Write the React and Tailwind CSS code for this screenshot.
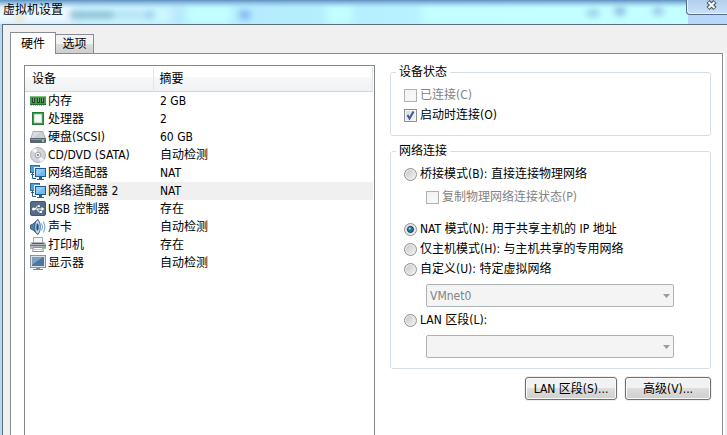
import { useState } from "react";

const MemoryIcon = () => (
	<svg viewBox="0 0 16 16" className="h-4 w-4" aria-hidden="true">
		<rect x="0" y="3" width="16" height="9" fill="#3f9c48" />
		<rect x="0" y="3" width="16" height="1" fill="#7cc47d" />
		<rect x="2" y="5" width="3" height="5" fill="#2b3f2e" />
		<rect x="7" y="5" width="3" height="5" fill="#2b3f2e" />
		<rect x="11" y="5" width="3" height="5" fill="#2b3f2e" />
		<path d="M3.500 5v4M8.500 5v4M12.500 5v4" stroke="#8b9a8c" strokeWidth="1" />
		<rect x="0" y="11" width="16" height="1" fill="#20702e" />
		<path
			d="M1 12.500h14"
			stroke="#c5b96c"
			strokeWidth="1"
			strokeDasharray="1 1"
		/>
	</svg>
);

const CpuIcon = () => (
	<svg viewBox="0 0 16 16" className="h-4 w-4" aria-hidden="true">
		<rect x="2.500" y="1.500" width="11" height="12" fill="#3fa14f" stroke="#1d7c36" />
		<rect x="4" y="3" width="8" height="9" rx="1" fill="#cfe9d0" />
		<rect x="5" y="4" width="7" height="8" fill="#d5d9d6" />
		<rect x="5" y="4" width="6" height="7" fill="#f7f9f7" />
	</svg>
);

const DiskIcon = () => (
	<svg viewBox="0 0 16 16" className="h-4 w-4" aria-hidden="true">
		<path d="M3 2h10l3 8H0z" fill="#a3abb4" />
		<path d="M3.500 3h9L14.500 9h-13z" fill="#c9ced4" />
		<path d="M3.500 3h7L3 9H1.500z" fill="#dadee2" />
		<rect x="0" y="9" width="16" height="5" rx="1" fill="#5a6572" />
		<path d="M1 10.500h14" stroke="#8a95a2" />
		<rect x="12" y="11" width="2" height="2" fill="#7de07f" />
	</svg>
);

const DiscIcon = () => (
	<svg viewBox="0 0 16 16" className="h-4 w-4" aria-hidden="true">
		<circle cx="8" cy="8" r="7.500" fill="#d0d4d9" stroke="#a2a8ae" strokeWidth="0.800" />
		<path d="M8 8 2 3.500A7 7 0 0 1 6 1.200zM8 8l6 4.500a7 7 0 0 1-4 2.300z" fill="#f5f6f8" />
		<circle cx="8" cy="8" r="2.800" fill="#eef0f2" stroke="#8f969e" strokeWidth="0.800" />
		<circle cx="8" cy="8" r="1" fill="#6d747c" />
	</svg>
);

const NetworkIcon = () => (
	<svg viewBox="0 0 16 16" className="h-4 w-4" aria-hidden="true">
		<rect x="0.500" y="0.500" width="9" height="7" fill="#4b9fd9" stroke="#2b6ba0" />
		<path d="M2.500 8v5.500H6" fill="none" stroke="#28608f" />
		<path d="M1 9.500h4" stroke="#28608f" />
		<rect x="4" y="2" width="12" height="10" fill="#f1f7fb" />
		<rect x="5.500" y="3.500" width="10" height="8" fill="#6fbaf0" stroke="#1e5a90" />
		<path d="M6 4h9L6 11z" fill="#90cdf6" />
		<path d="M9 12h3v2H9z" fill="#28608f" />
		<path d="M7 14.500h7" stroke="#28608f" />
	</svg>
);

const UsbIcon = () => (
	<svg viewBox="0 0 16 16" className="h-4 w-4" aria-hidden="true">
		<rect x="0.500" y="0.500" width="15" height="14" rx="1.500" fill="#556d88" stroke="#42586f" />
		<path
			d="M3 8h9M5 8l2.500-3H9M7 8l2 3h2"
			fill="none"
			stroke="#fff"
			strokeWidth="1"
		/>
		<circle cx="3.500" cy="8" r="1.500" fill="#fff" />
		<path d="M11.500 6 14.500 8l-3 2z" fill="#fff" />
		<circle cx="9" cy="5" r="1" fill="#fff" />
		<rect x="10" y="10" width="2" height="2" fill="#fff" />
	</svg>
);

const SoundIcon = () => (
	<svg viewBox="0 0 16 16" className="h-4 w-4" aria-hidden="true">
		<path d="M0.500 6 3 5l5-4.500v15L3 11l-2.500-1z" fill="#4f80ac" stroke="#2b5379" strokeWidth="0.800" />
		<ellipse cx="7.500" cy="8" rx="2.800" ry="7" fill="#b9d5ec" stroke="#2b5379" strokeWidth="0.800" />
		<ellipse cx="7.500" cy="8" rx="1.200" ry="3.500" fill="#27557f" />
		<path
			d="M11.500 4.500q2 3.500 0 7M13.500 2.500q3 5.500 0 11"
			fill="none"
			stroke="#62a2d5"
		/>
	</svg>
);

const PrinterIcon = () => (
	<svg viewBox="0 0 16 16" className="h-4 w-4" aria-hidden="true">
		<path d="M3.500 0.500h9V6h-9z" fill="#f5f6f8" stroke="#a3a9b2" />
		<path d="M1.500 5h13L16 7v5H0V7z" fill="#b0b5be" />
		<path d="M0 8.500h16" stroke="#6e7682" />
		<path d="M2 6.500h12" stroke="#555c68" />
		<rect x="13" y="9" width="3" height="2" fill="#58d35b" />
		<path d="M3.500 10.500h9l1 4h-11z" fill="#fff" stroke="#8a919c" />
		<path d="M4 12.500h8" stroke="#c9cdd3" />
	</svg>
);

const DisplayIcon = () => (
	<svg viewBox="0 0 16 16" className="h-4 w-4" aria-hidden="true">
		<rect x="0.500" y="0.500" width="15" height="12" fill="#dbe2ea" stroke="#8596a8" />
		<rect x="2" y="2" width="12" height="9" fill="#4d759e" />
		<path d="M2 2h11L2 10z" fill="#7d9fc2" />
		<path d="M6 13h4v1H6z" fill="#8795a6" />
		<path d="M3 14.500h10" stroke="#76879a" />
	</svg>
);

const devices = [
	{ name: "内存", summary: "2 GB", icon: MemoryIcon },
	{ name: "处理器", summary: "2", icon: CpuIcon },
	{ name: "硬盘(SCSI)", summary: "60 GB", icon: DiskIcon },
	{ name: "CD/DVD (SATA)", summary: "自动检测", icon: DiscIcon },
	{ name: "网络适配器", summary: "NAT", icon: NetworkIcon },
	{ name: "网络适配器 2", summary: "NAT", icon: NetworkIcon },
	{ name: "USB 控制器", summary: "存在", icon: UsbIcon },
	{ name: "声卡", summary: "自动检测", icon: SoundIcon },
	{ name: "打印机", summary: "存在", icon: PrinterIcon },
	{ name: "显示器", summary: "自动检测", icon: DisplayIcon },
];

const Checkbox = ({ label, disabled, defaultChecked }) => (
	<label
		className={`flex h-5 items-center gap-[3px] ${disabled ? "text-[#838383]" : ""}`}
	>
		<span className="relative flex">
			<input
				type="checkbox"
				disabled={disabled}
				defaultChecked={defaultChecked}
				className="peer h-[13px] w-[13px] appearance-none border border-[#8e8f8f] bg-linear-to-br from-[#d5d9de] to-[#f6f6f6] shadow-[inset_0_0_0_1px_#f4f4f4] disabled:border-[#b1b1b1] disabled:from-[#f0f0f0] disabled:to-[#fbfbfb]"
			/>
			<svg
				viewBox="0 0 13 13"
				className="pointer-events-none absolute inset-0 hidden h-[13px] w-[13px] peer-checked:block"
				aria-hidden="true"
			>
				<path
					d="M3.500 6 5.500 9.500 9.500 2.500"
					fill="none"
					stroke="#3f5795"
					strokeWidth="2"
				/>
			</svg>
		</span>
		{label}
	</label>
);

const Radio = ({ label, value, selected, onSelect }) => (
	<label className="flex h-5 items-center gap-[3px]">
		<span className="relative flex">
			<input
				type="radio"
				name="connection"
				value={value}
				checked={selected === value}
				onChange={() => onSelect(value)}
				className="peer h-[13px] w-[13px] appearance-none rounded-full border border-[#8e8f8f] bg-linear-to-br from-[#c3c7cb] to-[#f4f4f4] shadow-[inset_0_0_0_1px_#f0f0f0]"
			/>
			<svg
				viewBox="0 0 13 13"
				className="pointer-events-none absolute inset-0 hidden h-[13px] w-[13px] peer-checked:block"
				aria-hidden="true"
			>
				<circle cx="6.500" cy="6.500" r="3" fill="#1c7db0" stroke="#12304d" />
				<circle cx="5.700" cy="5.500" r="1.100" fill="#a9e4f8" />
			</svg>
		</span>
		{label}
	</label>
);

const Dropdown = ({ label, children }) => (
	<div className="relative mt-[5px] mr-9 ml-[35px]">
		<select
			disabled
			aria-label={label}
			className="block h-[23px] w-full appearance-none rounded-xs border border-[#adb2b5] bg-[#f4f4f4] px-[3px] text-[#838383] opacity-100"
		>
			{children}
		</select>
		<svg
			viewBox="0 0 7 4"
			className="pointer-events-none absolute top-[10px] right-1 h-1 w-[7px]"
			aria-hidden="true"
		>
			<path d="M0 0h7L3.500 4z" fill="#9b9b9b" />
		</svg>
	</div>
);

const GroupBox = ({ title, children }) => (
	<fieldset className="min-w-0 rounded-[3px] border border-[#d5dfe5]">
		<legend className="ml-[5px] px-[3px] leading-4">{title}</legend>
		<div className="pt-[5px] pb-[10px]">{children}</div>
	</fieldset>
);

const buttonClass =
	"h-[23px] rounded-[3px] border border-[#707070] bg-linear-to-b from-[#f2f2f2] from-50% via-[#dddddd] via-50% to-[#cfcfcf] whitespace-nowrap shadow-[inset_0_0_0_1px_#fafafa,0_0_0_1px_#f0f0f0]";

const TitleBar = () => (
	<header className="relative flex h-6 justify-between overflow-hidden bg-linear-to-r from-[#bce2f9] via-[#b4eeff] via-45% to-[#c4ffff]">
		{/* Glass reflections */}
		<svg
			className="absolute inset-0 h-full w-full"
			viewBox="0 0 727 24"
			preserveAspectRatio="none"
			aria-hidden="true"
		>
			<defs>
				<filter id="soft" x="-50%" y="-100%" width="200%" height="300%">
					<feGaussianBlur stdDeviation="4" />
				</filter>
				<filter
					id="smudge"
					filterUnits="userSpaceOnUse"
					x="0"
					y="-10"
					width="727"
					height="44"
				>
					<feGaussianBlur stdDeviation="3" />
				</filter>
				<linearGradient id="topShade" x2="0" y2="1">
					<stop offset="0" stopColor="#6090c0" />
					<stop offset="0.150" stopColor="#86b6dc" stopOpacity="0.700" />
					<stop offset="0.350" stopColor="#a9dcf4" stopOpacity="0" />
				</linearGradient>
			</defs>
			<g filter="url(#soft)">
				<rect x="-10" y="4" width="85" height="20" fill="#eefaff" />
				<rect x="78" y="6" width="94" height="18" fill="#cdf8ff" />
				<rect x="186" y="4" width="46" height="20" fill="#c3ffff" />
				<rect x="326" y="4" width="26" height="20" fill="#c3ffff" />
				<rect x="422" y="4" width="260" height="20" fill="#c4ffff" />
			</g>
			<g filter="url(#smudge)">
				<path d="M70 15h44" stroke="#7fb3d0" strokeWidth="6" />
				<path d="M116 15h30" stroke="#a4d0e8" strokeWidth="4" />
				<ellipse cx="20" cy="17" rx="4" ry="4" fill="#f0dcb4" />
				<ellipse cx="150" cy="15" rx="4" ry="4" fill="#8fc9ed" />
				<ellipse cx="245" cy="15" rx="6" ry="5" fill="#82b9f3" />
				<ellipse cx="593" cy="13" rx="7" ry="4" fill="#95cfec" />
				<ellipse cx="620" cy="11" rx="6" ry="5" fill="#8fbfe8" />
				<ellipse cx="658" cy="11" rx="6" ry="5" fill="#9ccaee" />
			</g>
			<rect width="727" height="24" fill="url(#topShade)" />
			<rect x="688" width="39" height="24" fill="#b9d7f8" />
		</svg>
		<h1 className="relative pl-[3px] leading-5 text-black">虚拟机设置</h1>
		<button
			type="button"
			aria-label="关闭"
			className="relative flex h-[15px] w-[41px] items-start justify-center rounded-bl-[4px] border-b border-l border-[#536f8d] bg-linear-to-b from-[#b3cfee] to-[#c9e0f8] shadow-[inset_1px_-1px_0_#e5f2fd]"
		>
			<svg viewBox="0 0 13 11" className="mr-[-8px] h-[11px] w-[13px]" aria-hidden="true">
				<path
					d="M3 1.500 10 8.500M10 1.500 3 8.500"
					stroke="#4d5661"
					strokeWidth="4.500"
				/>
				<path
					d="M3.500 2 9.500 8M9.500 2 3.500 8"
					stroke="#f6f6f6"
					strokeWidth="2.200"
				/>
			</svg>
		</button>
	</header>
);

const DeviceTable = () => (
	<div className="border-x border-t border-[#828790] bg-white pt-px pr-px">
		<table className="w-full table-fixed border-collapse text-left">
			<thead className="bg-linear-to-b from-white from-40% via-[#f7f8fa] via-40% to-[#f1f2f4]">
				<tr className="h-6 border-b border-[#d5d5d5]">
					<th className="w-[128px] border-r border-[#e0e3e8] p-0 pl-[7px] font-normal">
						设备
					</th>
					<th className="border-r border-[#e0e3e8] p-0 pl-[6px] font-normal">
						摘要
					</th>
				</tr>
			</thead>
			<tbody>
				{devices.map(({ name, summary, icon: Icon }, index) => (
					<tr key={name} className="h-[18px] leading-[18px]">
						<td className="p-0">
							<div className="flex h-[18px] items-center pl-[5px]">
								<Icon />
								<span
									className={`flex-1 pl-[2px] whitespace-nowrap ${index === 5 ? "bg-[#f0f0f0]" : ""}`}
								>
									{name}
								</span>
							</div>
						</td>
						<td className={`p-0 pl-[7px] ${index === 5 ? "bg-[#f0f0f0]" : ""}`}>
							{summary}
						</td>
					</tr>
				))}
			</tbody>
		</table>
	</div>
);

const App = () => {
	const [mode, setMode] = useState("nat");

	return (
		<div className="flex min-h-screen flex-col bg-[#b9d7f3] font-['DejaVu_Sans_Condensed','Noto_Sans_CJK_SC',sans-serif] text-[12px] text-black">
			<TitleBar />

			<main className="ml-[2px] flex flex-1 flex-col border-t border-l border-[#5d6f7c] bg-[#f0f0f0] pt-[7px] pr-[4px] pl-[7px]">
				{/* Tabs */}
				<div role="tablist" className="flex items-end">
					<button
						type="button"
						role="tab"
						aria-selected="true"
						className="relative -mb-px h-[22px] w-[46px] border border-b-0 border-[#898c95] bg-white"
					>
						硬件
					</button>
					<button
						type="button"
						role="tab"
						aria-selected="false"
						className="h-[19px] w-[38px] border-t border-r border-[#898c95] bg-linear-to-b from-[#f2f2f2] from-50% via-[#dddddd] via-50% to-[#cfcfcf]"
					>
						选项
					</button>
				</div>

				{/* Hardware panel */}
				<div
					role="tabpanel"
					className="grid flex-1 grid-cols-[351fr_321fr] gap-[15px] border-x border-t border-[#898c95] bg-white pr-[11px] pl-[13px] shadow-[2px_0_0_#ffffff]"
				>
					<div className="grid pt-[11px]">
						<DeviceTable />
					</div>

					<div className="flex flex-col gap-[7px] pt-[10px]">
						<GroupBox title="设备状态">
							<div className="pl-[13px]">
								<Checkbox label="已连接(C)" disabled />
								<Checkbox label="启动时连接(O)" defaultChecked />
							</div>
						</GroupBox>

						<GroupBox title="网络连接">
							<div className="pl-[13px]">
								<Radio
									label="桥接模式(B): 直接连接物理网络"
									value="bridged"
									selected={mode}
									onSelect={setMode}
								/>
								<div className="my-[3px] pb-[9px] pl-[22px]">
									<Checkbox label="复制物理网络连接状态(P)" disabled />
								</div>
								<Radio
									label="NAT 模式(N): 用于共享主机的 IP 地址"
									value="nat"
									selected={mode}
									onSelect={setMode}
								/>
								<Radio
									label="仅主机模式(H): 与主机共享的专用网络"
									value="host"
									selected={mode}
									onSelect={setMode}
								/>
								<Radio
									label="自定义(U): 特定虚拟网络"
									value="custom"
									selected={mode}
									onSelect={setMode}
								/>
							</div>
							<Dropdown label="特定虚拟网络">
								<option>VMnet0</option>
							</Dropdown>
							<div className="mt-[3px] pl-[13px]">
								<Radio
									label="LAN 区段(L):"
									value="lan"
									selected={mode}
									onSelect={setMode}
								/>
							</div>
							<Dropdown label="LAN 区段" />
						</GroupBox>

						<div className="flex justify-end gap-2 pt-px">
							<button type="button" className={`w-[92px] ${buttonClass}`}>
								LAN 区段(S)...
							</button>
							<button type="button" className={`w-[86px] ${buttonClass}`}>
								高级(V)...
							</button>
						</div>
					</div>
				</div>
			</main>
		</div>
	);
};

export default App;
